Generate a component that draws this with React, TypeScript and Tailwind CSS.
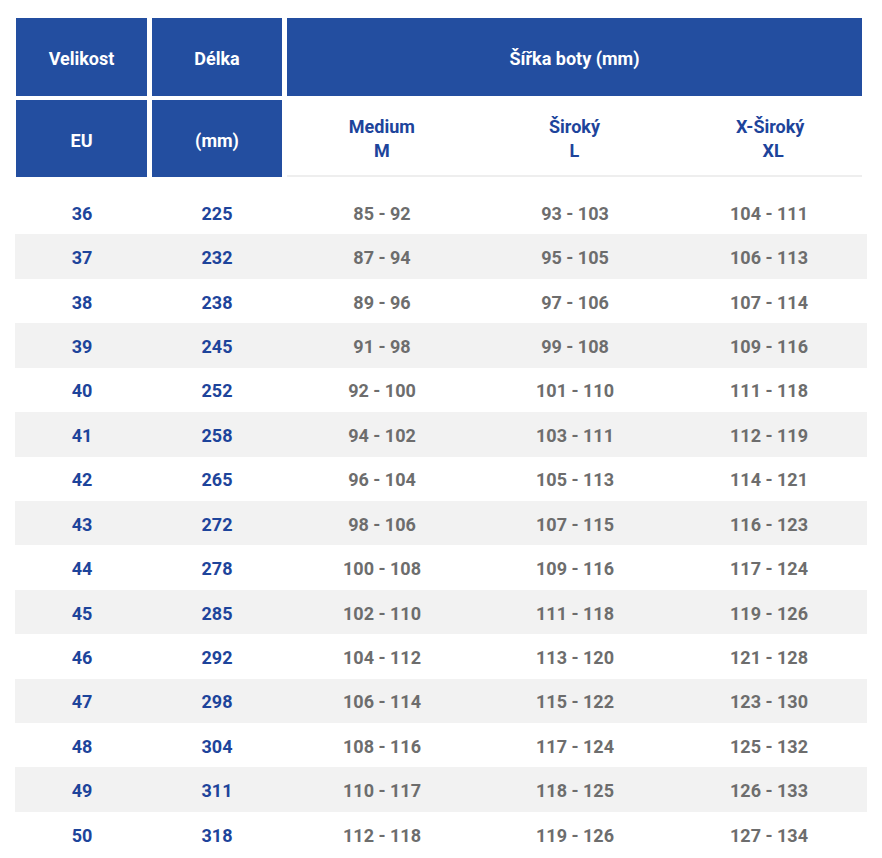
const rows = [
  ["36", "225", "85 - 92", "93 - 103", "104 - 111"],
  ["37", "232", "87 - 94", "95 - 105", "106 - 113"],
  ["38", "238", "89 - 96", "97 - 106", "107 - 114"],
  ["39", "245", "91 - 98", "99 - 108", "109 - 116"],
  ["40", "252", "92 - 100", "101 - 110", "111 - 118"],
  ["41", "258", "94 - 102", "103 - 111", "112 - 119"],
  ["42", "265", "96 - 104", "105 - 113", "114 - 121"],
  ["43", "272", "98 - 106", "107 - 115", "116 - 123"],
  ["44", "278", "100 - 108", "109 - 116", "117 - 124"],
  ["45", "285", "102 - 110", "111 - 118", "119 - 126"],
  ["46", "292", "104 - 112", "113 - 120", "121 - 128"],
  ["47", "298", "106 - 114", "115 - 122", "123 - 130"],
  ["48", "304", "108 - 116", "117 - 124", "125 - 132"],
  ["49", "311", "110 - 117", "118 - 125", "126 - 133"],
  ["50", "318", "112 - 118", "119 - 126", "127 - 134"],
];

const cell = "flex items-center justify-center pt-[3px] bg-[#234ea0] text-white";

export default function App() {
  return (
    <div
      className="w-[882px] h-[858px] bg-white overflow-hidden pt-[18px] text-[18px] font-bold"
      style={{ fontFamily: "Roboto, 'Liberation Sans', sans-serif" }}
    >
      {/* Header */}
      <div className="ml-[16px] w-[846px] grid grid-cols-[131px_130px_575px] grid-rows-[78px_77px] gap-x-[5px] gap-y-[4px]">
        <div className={cell}>Velikost</div>
        <div className={cell}>Délka</div>
        <div className={cell}>Šířka boty (mm)</div>
        <div className={cell}>EU</div>
        <div className={cell}>(mm)</div>
        <div className="grid grid-cols-3 pt-[2px] border-b-2 border-[#eeeeee] text-[#1d449b] leading-[24px]">
          <div className="flex flex-col items-center justify-center pr-[2px]">
            <span>Medium</span>
            <span>M</span>
          </div>
          <div className="flex flex-col items-center justify-center">
            <span>Široký</span>
            <span>L</span>
          </div>
          <div className="flex flex-col items-center justify-center pl-[8px]">
            <span>X-Široký</span>
            <span className="pl-[6px]">XL</span>
          </div>
        </div>
      </div>

      {/* Body */}
      <div className="ml-[15px] w-[852px] mt-[13px]">
        {rows.map((r, i) => (
          <div
            key={r[0]}
            className={`grid grid-cols-[134px_136px_194px_192px_196px] h-[44.43px] pt-[2px] items-center text-center ${
              i % 2 === 1 ? "bg-[#f2f2f2]" : "bg-white"
            }`}
          >
            <div className="text-[#1d449b]">{r[0]}</div>
            <div className="text-[#1d449b]">{r[1]}</div>
            <div className="text-[#6d6d6d]">{r[2]}</div>
            <div className="text-[#6d6d6d]">{r[3]}</div>
            <div className="text-[#6d6d6d]">{r[4]}</div>
          </div>
        ))}
      </div>
    </div>
  );
}
